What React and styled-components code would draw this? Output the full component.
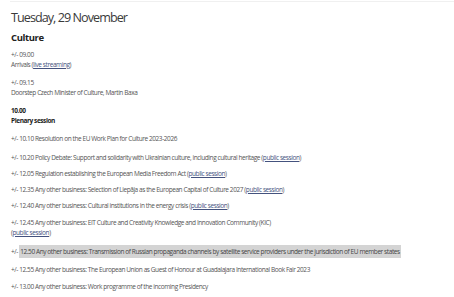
import React from "react";
import styled, { createGlobalStyle } from "styled-components";

const Global = createGlobalStyle`
  html, body { margin: 0; padding: 0; background: #fff; }
  body { font-family: "Open Sans", "Liberation Sans", sans-serif; }
`;

const Page = styled.div`
  width: 454px;
  height: 297px;
  overflow: hidden;
  padding: 1px 0 0 10px;
  box-sizing: border-box;
`;

const Rule = styled.div`
  border-top: 1px solid #f0f0f0;
`;

const Title = styled.h1`
  margin: 7px 0 0 1px;
  font-size: 12.6px;
  line-height: 18px;
  font-weight: 400;
  color: #3a3a3a;
  letter-spacing: -0.95px;
`;

const Section = styled.h2`
  margin: 5px 0 0 1px;
  font-size: 9.5px;
  line-height: 12px;
  font-weight: 700;
  color: #222;
  letter-spacing: -0.4px;
`;

const Item = styled.p`
  margin: ${(p) => p.$top ?? 8}px 0 0 1px;
  font-size: 6.5px;
  line-height: 10px;
  color: ${(p) => (p.$bold ? "#222" : "#555")};
  font-weight: ${(p) => (p.$bold ? 700 : 400)};
  letter-spacing: -0.42px;
  white-space: nowrap;
`;

const Link = styled.a`
  color: #44527e;
  text-decoration: underline;
`;

const Mark = styled.span`
  background: #d4d4d4;
  color: #444;
  padding: 2px 1px 2px 1px;
`;

const pub = <>(<Link>public session</Link>)</>;

export default function App() {
  return (
    <>
      <Global />
      <Page>
        <Rule />
        <Title>Tuesday, 29 November</Title>
        <Section>Culture</Section>
        <Item $top={6}>
          +/- 09.00
          <br />
          Arrivals (<Link>live streaming</Link>)
        </Item>
        <Item>
          +/- 09.15
          <br />
          Doorstep Czech Minister of Culture, Martin Baxa
        </Item>
        <Item $bold>
          10.00
          <br />
          Plenary session
        </Item>
        <Item>+/- 10.10 Resolution on the EU Work Plan for Culture 2023-2026</Item>
        <Item $top={9}>
          +/- 10.20 Policy Debate: Support and solidarity with Ukrainian culture, including cultural heritage {pub}
        </Item>
        <Item $top={6}>+/- 12.05 Regulation establishing the European Media Freedom Act {pub}</Item>
        <Item $top={6}>
          +/- 12.35 Any other business: Selection of Liepāja as the European Capital of Culture 2027 {pub}
        </Item>
        <Item $top={6}>+/- 12.40 Any other business: Cultural institutions in the energy crisis {pub}</Item>
        <Item $top={7}>
          +/- 12.45 Any other business: EIT Culture and Creativity Knowledge and Innovation Community (KIC)
          <br />
          {pub}
        </Item>
        <Item $top={9}>
          +/-{" "}
          <Mark>
            12.50 Any other business: Transmission of Russian propaganda channels by satellite service providers under the jurisdiction of EU member states
          </Mark>
        </Item>
        <Item>+/- 12.55 Any other business: The European Union as Guest of Honour at Guadalajara International Book Fair 2023</Item>
        <Item $top={7}>+/- 13.00 Any other business: Work programme of the incoming Presidency</Item>
      </Page>
    </>
  );
}
